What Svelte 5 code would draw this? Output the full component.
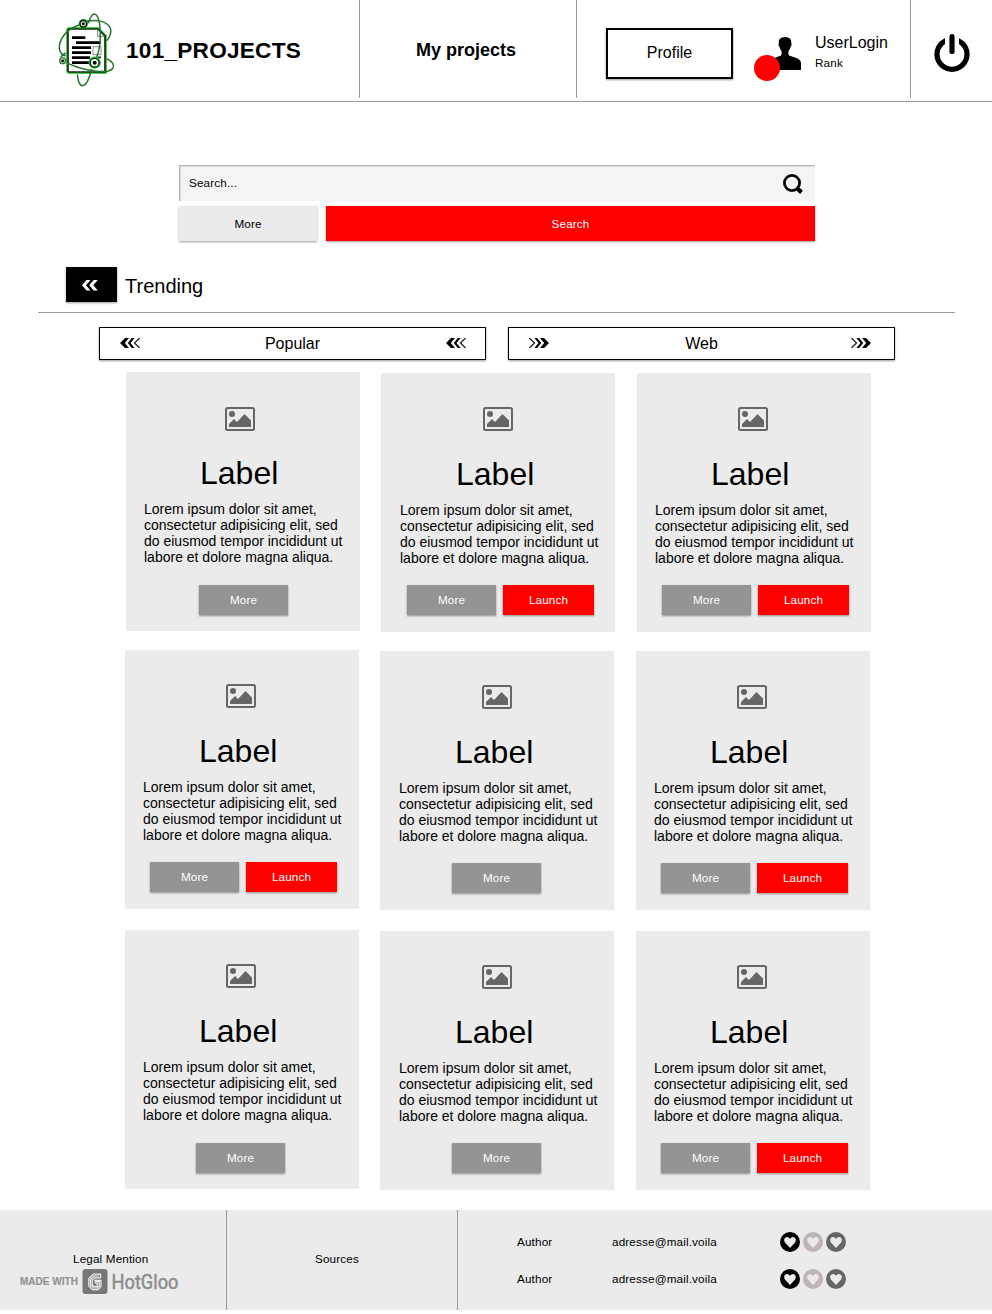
<script>
  const text = 'Lorem ipsum dolor sit amet, consectetur adipisicing elit, sed do eiusmod tempor incididunt ut labore et dolore magna aliqua.';
  // icon / copy / actions: left insets inside the card; drop: button row nudge
  const rows = [
    { inset: 126, top: 12, cards: [
      { gap: 0, top: 0, icon: 99, iconTop: 35, copy: 18, actions: 73, drop: 1, launch: false },
      { gap: 21, top: 1, icon: 102, iconTop: 34, copy: 19, actions: 26, drop: 0, launch: true },
      { gap: 22, top: 1, icon: 101, iconTop: 34, copy: 18, actions: 25, drop: 0, launch: true }
    ] },
    { inset: 125, top: 18, cards: [
      { gap: 0, top: 0, icon: 101, iconTop: 34, copy: 18, actions: 25, drop: 0, launch: true },
      { gap: 21, top: 1, icon: 102, iconTop: 34, copy: 19, actions: 72, drop: 0, launch: false },
      { gap: 22, top: 1, icon: 101, iconTop: 34, copy: 18, actions: 25, drop: 0, launch: true }
    ] },
    { inset: 125, top: 20, cards: [
      { gap: 0, top: 0, icon: 101, iconTop: 34, copy: 18, actions: 71, drop: 1, launch: false },
      { gap: 21, top: 1, icon: 102, iconTop: 34, copy: 19, actions: 72, drop: 0, launch: false },
      { gap: 22, top: 1, icon: 101, iconTop: 34, copy: 18, actions: 25, drop: 0, launch: true }
    ] }
  ];
  const authors = ['adresse@mail.voila', 'adresse@mail.voila'];
  const hearts = ['#000', '#bfb4b4', '#666'];
</script>

{#snippet arrows(flip)}
  <svg class="arrows" class:flip width="21" height="10" viewBox="0 0 21 10">
    <path d="M5 0H9L4.8 5L9 10H5L0 5Z" />
    <path d="M11.8 0H14.6L10.5 5L14.6 10H11.8L7.8 5Z" />
    <path d="M19.6 0L14.5 5L19.6 10" fill="none" stroke="#222" stroke-width="1.3" />
  </svg>
{/snippet}

<div class="page">
  <header>
    <div class="brand">
      <svg width="60" height="76" viewBox="48 36 180 228" fill="none">
        <path d="M88 87H174L195 108V216H88Q84 216 84 211V91Q84 87 88 87Z" stroke="#48d048" stroke-width="12" />
        <path d="M88 87H174L195 108V216H88Q84 216 84 211V91Q84 87 88 87Z" fill="#fff" stroke="#162616" stroke-width="5" />
        <path d="M173 90V109H193" stroke="#444" stroke-width="2" />
        <path d="M96 113H136M108 128H183M96 143H153M96 158H153M96 173H150M96 188H153" stroke="#000" stroke-width="8" />
        <path d="M173 172H183" stroke="#222" stroke-width="5" />
        <path d="M159 140H183V164H159Z" stroke="#555" stroke-width="2" />
        <g stroke="#26752d" stroke-width="4.5">
          <path d="M140 63C180 57 207 68 212 88C214 101 208 113 200 122" />
          <path d="M117 75C81 87 57 116 58 145C59 157 64 164 77 168M62 171C67 166 72 162 77 159" />
          <path d="M145 70C151 51 157 41 164 42C178 45 183 84 180 129C179 147 174 162 169 174" />
          <path d="M80 188C114 207 180 219 205 213C219 209 223 202 219 192C216 185 209 180 200 177" />
          <path d="M112 223C114 246 120 257 128 257C137 256 147 240 155 207" />
        </g>
        <circle cx="130" cy="71" r="12" fill="#ddd" stroke="#159c25" stroke-width="4" />
        <circle cx="130" cy="71" r="9.5" fill="#eee" stroke="#152b15" stroke-width="4" />
        <circle cx="130" cy="71" r="4.5" fill="#000" />
        <circle cx="68" cy="182" r="9" fill="#ddd" stroke="#327936" stroke-width="4" />
        <circle cx="68" cy="182" r="4.5" fill="#111" />
        <circle cx="164" cy="188" r="16" fill="#fff" stroke="#20bd2d" stroke-width="5" />
        <circle cx="164" cy="188" r="13" fill="#fff" stroke="#102910" stroke-width="4" />
        <circle cx="164" cy="188" r="6" fill="#000" />
      </svg>
      <span>101_PROJECTS</span>
    </div>
    <div class="mine">My projects</div>
    <div class="account">
      <button class="profile">Profile</button>
      <svg class="user" width="49" height="46" viewBox="0 0 49 46">
        <path d="M18 34V27Q18 24 23 22L27 20.5Q28 19.5 27.5 16Q26 14.5 25.6 12Q24.4 11 24.5 9L24.8 8Q24.2 2 31 2Q37.8 2 37.3 8L37.6 9Q37.6 11 36.5 12Q36 14.5 34.5 16Q34 19.5 35 20.5L41 22.5Q47 24.5 47 28V35H18Z" />
        <circle cx="13" cy="33" r="13" fill="#f00" />
      </svg>
      <div class="who"><div class="login">UserLogin</div><div class="rank">Rank</div></div>
    </div>
    <div class="power">
      <svg width="36" height="40" viewBox="0 0 36 40" fill="none" stroke="#000">
        <circle cx="18" cy="21.3" r="15" stroke-width="5.2" />
        <path d="M11 0H25V18H11Z" fill="#fff" stroke="none" />
        <path d="M18 3.7V18.5" stroke-width="5.2" stroke-linecap="round" />
      </svg>
    </div>
  </header>

  <section class="search">
    <div class="field">
      <span>Search...</span>
      <svg width="20" height="21" viewBox="0 0 20 21" fill="none" stroke="#000">
        <circle cx="9" cy="9" r="7.6" stroke-width="2.8" />
        <path d="M13.8 14L18.5 18.4" stroke-width="4.2" />
      </svg>
    </div>
    <div class="pair">
      <button class="light">More</button>
      <button class="red">Search</button>
    </div>
  </section>

  <section class="heading">
    <button aria-label="Back">
      <svg width="16" height="11" viewBox="0 0 16 11" fill="#fff">
        <path d="M4.5 0H8.5L4 5.3L8.5 10.5H4.5L0 5.3Z" /><path d="M11.7 0H15.8L11.3 5.3L15.8 10.5H11.7L7.2 5.3Z" />
      </svg>
    </button>
    <h1>Trending</h1>
  </section>

  <nav>
    <div class="tab popular">{@render arrows(false)}<span>Popular</span>{@render arrows(false)}</div>
    <div class="tab web">{@render arrows(true)}<span>Web</span>{@render arrows(true)}</div>
  </nav>

  <main>
    {#each rows as row}
      <div class="row" style="padding-left:{row.inset}px;margin-top:{row.top}px">
        {#each row.cards as c}
          <article style="margin-left:{c.gap}px;margin-top:{c.top}px">
            <div class="media" style="padding:{c.iconTop}px 0 0 {c.icon}px">
              <svg width="30" height="24" viewBox="0 0 30 24" fill="#666">
                <rect x="1" y="1" width="28" height="22" rx="1.5" fill="none" stroke="#666" stroke-width="2" />
                <circle cx="7" cy="7" r="3" />
                <path d="M4 20V17L9 12L12 15L19.5 7L26 13.5V20Z" />
              </svg>
            </div>
            <div class="copy" style="margin-left:{c.copy}px">
              <h2>Label</h2>
              <p>{text}</p>
            </div>
            <div class="actions" style="padding-left:{c.actions}px;margin-top:{c.drop}px">
              <button class="grey">More</button>
              {#if c.launch}<button class="red">Launch</button>{/if}
            </div>
          </article>
        {/each}
      </div>
    {/each}
  </main>

  <footer>
    <div class="legal">
      <div>Legal Mention</div>
      <svg width="170" height="27" viewBox="0 0 170 27">
        <text x="0" y="17" font-size="10" font-weight="700" fill="#949494" stroke="#949494" stroke-width=".2" textLength="58" lengthAdjust="spacingAndGlyphs">MADE WITH</text>
        <rect x="62.5" y="1" width="25" height="25" rx="3" fill="#777" />
        <g fill="none" stroke="#eee" stroke-width="1.2">
          <path d="M80.6 9.8V6.2H73.5L68.8 10.5V18L72.5 21.6H78L81 18.5V12.3H75V15" />
          <path d="M80.6 9.8H75L72.2 12V16.8L74 18.5H77.3V15H75" />
          <path d="M79 8H74.2L70.5 11.2V17.3L73.3 20H77.3L79.3 17.8V13.7H76" />
        </g>
        <text class="gloo" x="91.5" y="20.5" font-size="20" fill="#8c8c8c" stroke="#8c8c8c" stroke-width=".5" textLength="67" lengthAdjust="spacingAndGlyphs">HotGloo</text>
      </svg>
    </div>
    <div class="sources">Sources</div>
    <div class="contacts">
      {#each authors as mail}
        <div class="contact">
          <span class="author">Author</span><span class="mail">{mail}</span>
          {#each hearts as color}
            <svg width="20" height="20" viewBox="0 0 20 20">
              <circle cx="10" cy="10" r="10" fill={color} />
              <path d="M10 16L4.7 10.2Q3.3 7.5 4.9 6Q7.6 3.8 10 6.7Q12.4 3.8 15.1 6Q16.7 7.5 15.3 10.2Z" fill="#ebebeb" />
            </svg>
          {/each}
        </div>
      {/each}
    </div>
  </footer>
</div>

<style>
  :global(body) { margin: 0; background: #fff; }
  .page { width: 992px; height: 1314px; overflow: hidden; font-family: "Liberation Sans", Arial, sans-serif; color: #000; font-size: 11.7px; letter-spacing: .15px; }
  * { box-sizing: border-box; }
  svg { display: block; flex: none; letter-spacing: 0; }
  button { font: inherit; letter-spacing: inherit; color: inherit; border: 0; border-radius: 0; padding: 0; display: flex; align-items: center; justify-content: center; box-shadow: 0 1px 2px rgba(0,0,0,.4); }
  h1, h2, p { margin: 0; font-weight: 400; letter-spacing: 0; }
  header { display: flex; height: 102px; border-bottom: 1px solid #999; }
  header > div { height: 98px; }
  .brand { width: 360px; display: flex; padding: 12px 0 0 56px; border-right: 1px solid #999; }
  .brand span { font: 700 22.6px/26px "Liberation Sans", Arial, sans-serif; letter-spacing: .25px; margin: 26px 0 0 10px; }
  .mine { width: 217px; border-right: 1px solid #999; padding: 40px 0 0 56px; font-size: 18px; line-height: 21px; font-weight: 700; letter-spacing: 0; }
  .account { width: 334px; border-right: 1px solid #999; display: flex; padding-left: 29px; }
  .profile { width: 127px; height: 51px; margin-top: 28px; padding-bottom: 2px; background: #fff; border: 2px solid #000; font-size: 16px; letter-spacing: 0; }
  .user { margin: 35px 0 0 21px; }
  .who { margin: 33px 0 0 12px; }
  .login { font-size: 16px; line-height: 19px; letter-spacing: 0; }
  .rank { line-height: 14px; margin-top: 4px; }
  .power { padding: 33px 0 0 23px; }
  .search { width: 636px; margin: 63px 0 0 179px; }
  .field { height: 36px; background: #f4f4f4; border-top: 1px solid #b5b5b5; border-left: 1px solid #b5b5b5; box-shadow: inset 1px 1px 0 #ddd; display: flex; justify-content: space-between; padding: 0 12px 0 9px; }
  .field span { line-height: 14px; margin-top: 10px; }
  .field svg { margin-top: 8px; }
  .pair { display: flex; margin-top: 5px; gap: 9px; }
  .pair button { height: 35px; }
  .light { width: 138px; background: #ebebeb; }
  .red { background: #f00; color: #fff; }
  .pair .red { width: 489px; }
  .heading { margin: 26px 37px 0 38px; padding-left: 28px; height: 46px; display: flex; border-bottom: 1px solid #999; }
  .heading button { width: 51px; height: 35px; background: #000; padding: 1px 3px 0 0; }
  .heading h1 { font-size: 20px; line-height: 23px; margin: 8px 0 0 8px; }
  nav { display: flex; gap: 22px; margin: 14px 0 0 99px; }
  .tab { width: 387px; height: 33px; border: 1px solid #000; display: flex; align-items: center; justify-content: space-between; padding: 0 18px 1px 20px; box-shadow: 0 1px 2px rgba(0,0,0,.4); font-size: 16px; letter-spacing: 0; }
  .tab span { line-height: 18px; padding-top: 2px; }
  .popular span { margin-left: -2px; }
  .web { padding: 0 23px 1px 19px; }
  .web span { margin-left: 4px; }
  .flip { transform: scaleX(-1); }
  .row { display: flex; height: 260px; align-items: flex-start; }
  article { width: 234px; height: 259px; background: #ebebeb; flex: none; }
  .media { height: 83px; }
  .copy { height: 129px; }
  h2 { font-size: 32px; line-height: 37px; margin-left: 56px; }
  p { font-size: 14px; line-height: 16px; width: 208px; margin-top: 9px; }
  .actions { display: flex; gap: 7px; }
  .actions button { width: 91px; height: 30px; padding-bottom: 2px; }
  .actions .grey { width: 89px; background: #949494; color: #fff; }
  footer { display: flex; height: 100px; margin-top: 20px; background: #ebebeb; line-height: 14px; }
  .legal { width: 227px; border-right: 1px solid #999; padding-top: 42px; }
  .legal div { margin-left: 73px; }
  .legal svg { margin: 2px 0 0 19.5px; }
  .gloo { font-family: Roboto, sans-serif; }
  .sources { width: 231px; border-right: 1px solid #999; padding: 42px 0 0 88px; }
  .contacts { padding: 22px 0 0 59px; }
  .contact { display: flex; align-items: center; gap: 3px; height: 20px; margin-bottom: 17px; }
  .author { width: 92px; }
  .mail { width: 165px; }
</style>
